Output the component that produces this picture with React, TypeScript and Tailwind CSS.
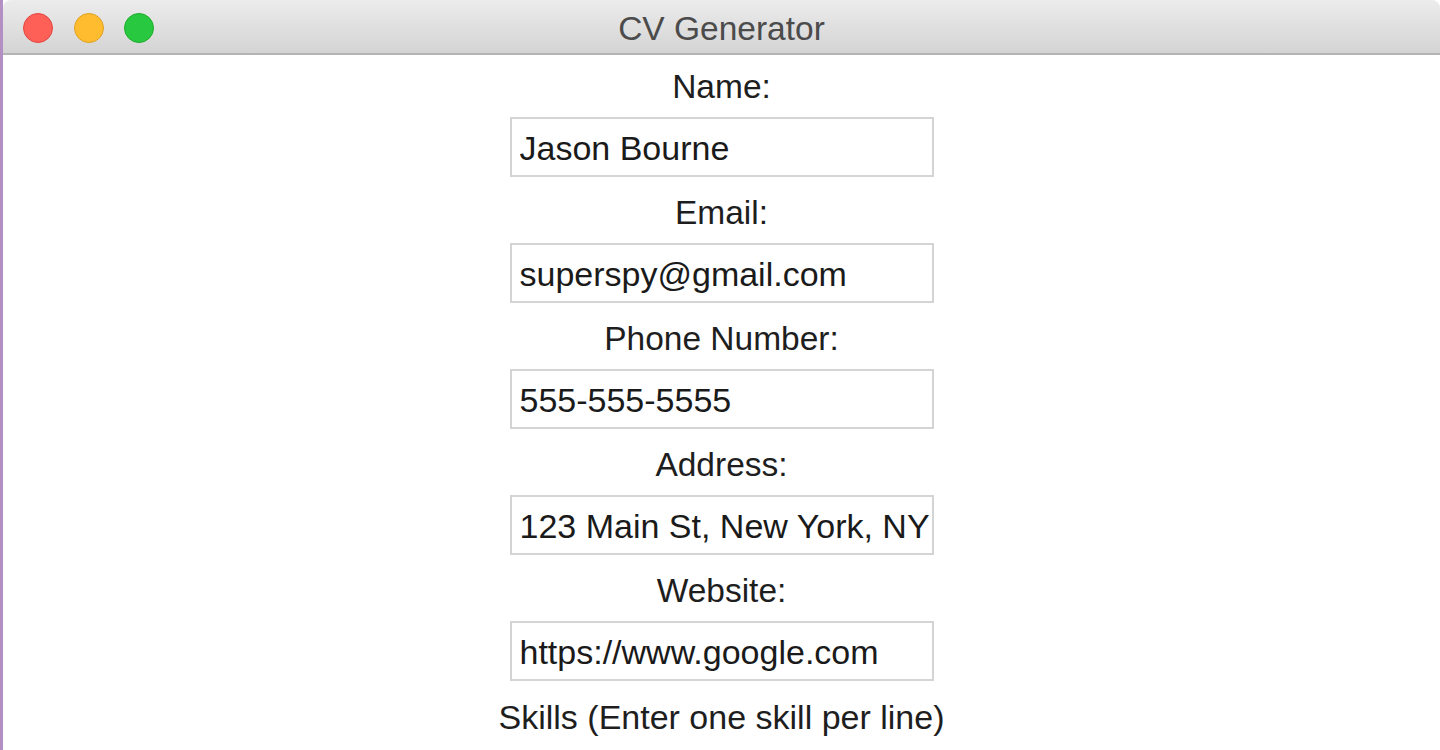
import { useState } from 'react';

const fields = [
  { label: 'Name:', value: 'Jason Bourne' },
  { label: 'Email:', value: 'superspy@gmail.com' },
  { label: 'Phone Number:', value: '555-555-5555' },
  { label: 'Address:', value: '123 Main St, New York, NY' },
  { label: 'Website:', value: 'https://www.google.com' },
];

function Field({ label, value }: { label: string; value: string }) {
  const [text, setText] = useState(value);
  return (
    <div className="flex flex-col items-center mt-[15px] first:mt-0">
      <div className="h-[38px] pt-[2px] leading-[38px] text-[33.5px] text-[#1e1e1e]">{label}</div>
      <input
        value={text}
        onChange={(e) => setText(e.target.value)}
        className="mt-[13px] h-[60px] w-[424px] border-2 border-[#d4d4d4] bg-white pl-[8px] pr-[2px] pt-[2px] text-[34px] text-[#1a1a1a] outline-none"
        style={{ fontFamily: '"Liberation Sans", Arial, sans-serif' }}
      />
    </div>
  );
}

export default function App() {
  return (
    <div
      className="h-screen w-full overflow-hidden bg-[#b48fc2] pl-[3px]"
      style={{ fontFamily: '"Liberation Sans", Arial, sans-serif' }}
    >
      <div className="flex h-full flex-col bg-white">
        {/* Title bar */}
        <div className="grid h-[55px] shrink-0 grid-cols-[1fr_auto_1fr] items-center rounded-tl-[8px] rounded-tr-[8px] border-b-2 border-[#b4b4b4] bg-gradient-to-b from-[#ececec] to-[#d4d4d4]">
          <div className="flex items-center gap-[20.5px] pl-[20px] pt-[2px]">
            <span className="h-[30px] w-[30px] rounded-full border border-[#e2463f] bg-[#fe5f57]" />
            <span className="h-[30px] w-[30px] rounded-full border border-[#dfa124] bg-[#febc2e]" />
            <span className="h-[30px] w-[30px] rounded-full border border-[#1dad2b] bg-[#28c840]" />
          </div>
          <div className="pt-[4px] text-[33.5px] leading-none text-[#4b4b4b]">CV Generator</div>
          <div />
        </div>

        {/* Form */}
        <div className="flex flex-col items-center pt-[11px]">
          {fields.map((f) => (
            <Field key={f.label} label={f.label} value={f.value} />
          ))}
          <div className="mt-[15px] h-[38px] pt-[2px] leading-[38px] text-[34px] text-[#1e1e1e]">
            Skills (Enter one skill per line)
          </div>
          <textarea className="mt-[16px] h-[120px] w-[424px] resize-none border-2 border-[#d4d4d4] outline-none" />
        </div>
      </div>
    </div>
  );
}
